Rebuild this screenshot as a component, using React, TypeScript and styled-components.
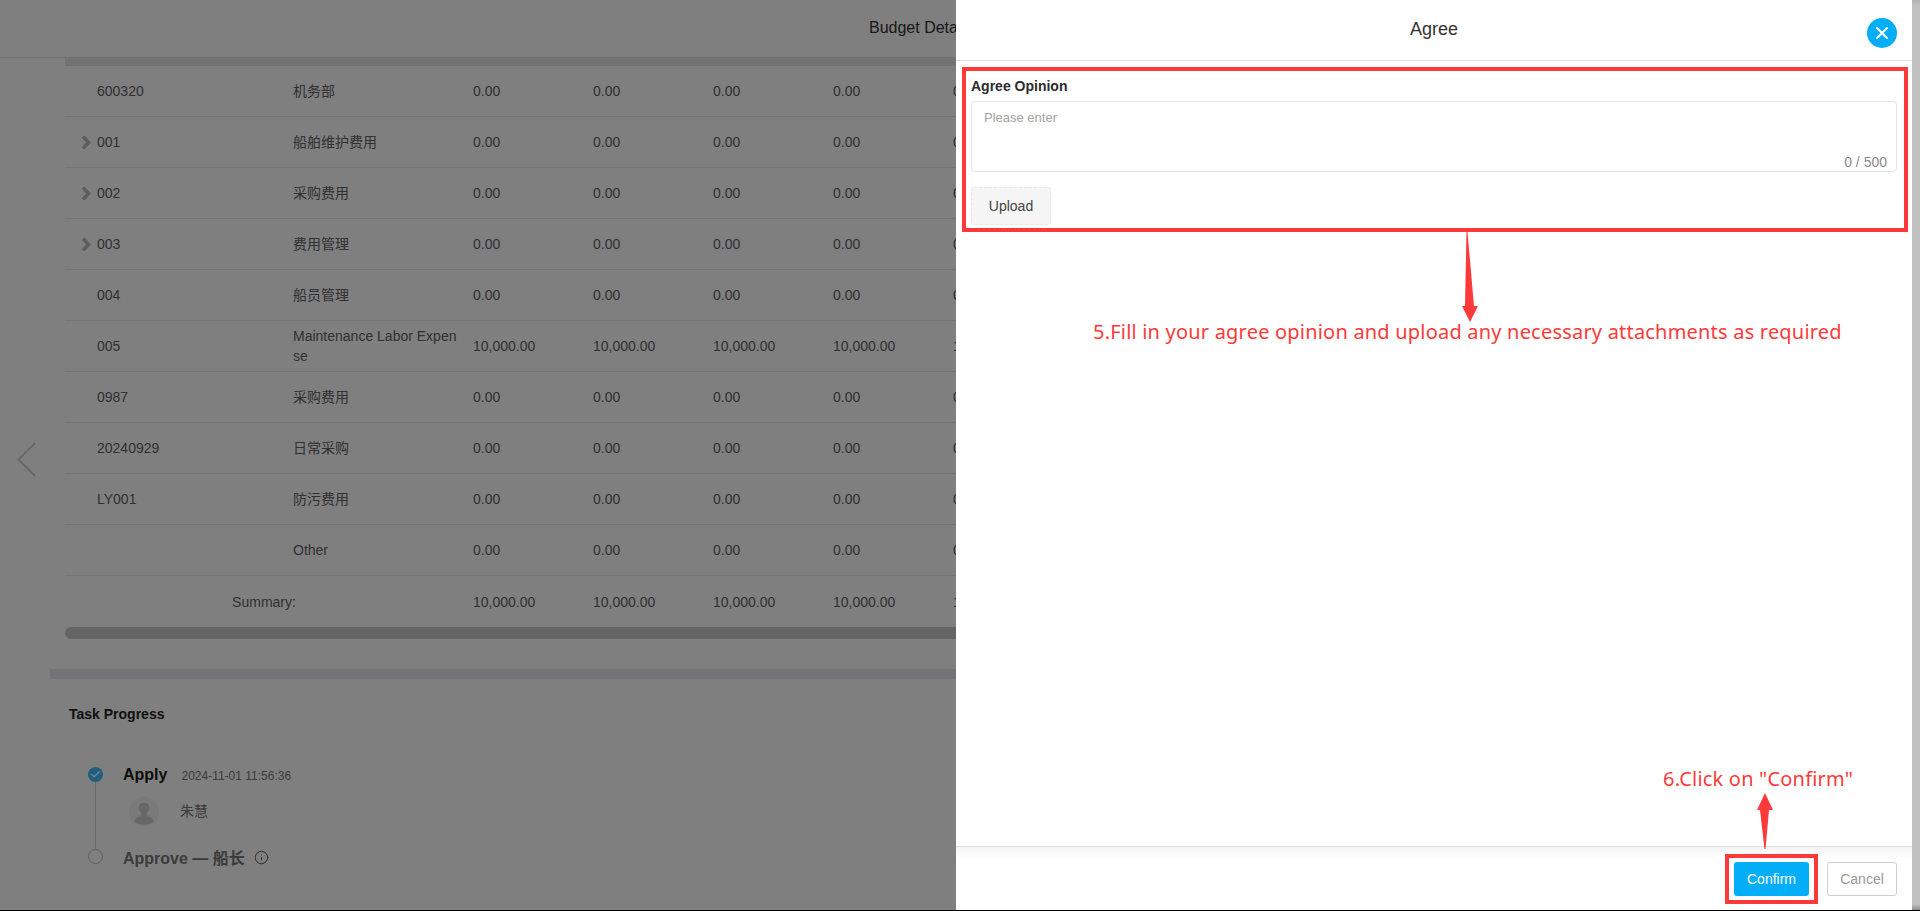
import React from 'react';
import styled, { createGlobalStyle } from 'styled-components';
import { Check, Info, X } from 'lucide-react';

const SANS = '"Liberation Sans", "Noto Sans CJK SC", sans-serif';
const RED = '#fd3a3a';

const GlobalStyle = createGlobalStyle`
  html, body {
    margin: 0;
    padding: 0;
    height: 100%;
    overflow: hidden;
    background: #fff;
    font-family: ${SANS};
  }
`;

type BudgetRow = {
  code: string;
  name: string;
  value: string;
  expandable?: boolean;
};

const ROWS: BudgetRow[] = [
  { code: '600320', name: '机务部', value: '0.00' },
  { code: '001', name: '船舶维护费用', value: '0.00', expandable: true },
  { code: '002', name: '采购费用', value: '0.00', expandable: true },
  { code: '003', name: '费用管理', value: '0.00', expandable: true },
  { code: '004', name: '船员管理', value: '0.00' },
  { code: '005', name: 'Maintenance Labor Expense', value: '10,000.00' },
  { code: '0987', name: '采购费用', value: '0.00' },
  { code: '20240929', name: '日常采购', value: '0.00' },
  { code: 'LY001', name: '防污费用', value: '0.00' },
  { code: '', name: 'Other', value: '0.00' },
];

const VALUE_COLUMNS = [0, 1, 2, 3, 4];

const App = () => {
  return (
    <>
      <GlobalStyle />
      <Screen>
        <Viewport>
          <Page>
            <PageHeader>Budget Details</PageHeader>
            <TableClip>
              <BudgetTable>
                <colgroup>
                  <col width={218} />
                  <col width={180} />
                  {VALUE_COLUMNS.map((i) => (
                    <col key={i} width={120} />
                  ))}
                </colgroup>
                <thead>
                  <tr>
                    <HeadBand colSpan={7} />
                  </tr>
                </thead>
                <tbody>
                  {ROWS.map((row) => (
                    <tr key={row.code + row.name}>
                      <CodeCell>
                        <CodeInner>
                          <ExpanderSlot>
                            {row.expandable && (
                              <svg width="10" height="13" viewBox="0 0 10 13">
                                <path d="M2 0.5 L7.5 6.5 L2 12.5" fill="none" stroke="#bcbcbc" strokeWidth="3.6" />
                              </svg>
                            )}
                          </ExpanderSlot>
                          {row.code}
                        </CodeInner>
                      </CodeCell>
                      <NameCell>{row.name}</NameCell>
                      {VALUE_COLUMNS.map((i) => (
                        <ValueCell key={i}>{row.value}</ValueCell>
                      ))}
                    </tr>
                  ))}
                  <tr>
                    <SummaryCell colSpan={2}>Summary:</SummaryCell>
                    {VALUE_COLUMNS.map((i) => (
                      <SummaryValue key={i}>10,000.00</SummaryValue>
                    ))}
                  </tr>
                </tbody>
              </BudgetTable>
              <TableScrollThumb />
            </TableClip>
            <SectionBand />
            <TaskSection>
              <TaskTitle>Task Progress</TaskTitle>
              <Step>
                <StepRail>
                  <DoneDot>
                    <Check size={11} color="#fff" strokeWidth={3} />
                  </DoneDot>
                  <StepLine />
                </StepRail>
                <StepBody>
                  <StepHead>
                    <StepName>Apply</StepName>
                    <StepTime>2024-11-01 11:56:36</StepTime>
                  </StepHead>
                  <Assignee>
                    <Avatar>
                      <svg width="30" height="30" viewBox="0 0 30 30">
                        <circle cx="15" cy="11" r="5.5" fill="#cfcfcf" />
                        <path d="M12.5 15 L17.5 15 L18 19 C21 20 24 21 25 24 A15 15 0 0 1 5 24 C6 21 9 20 12 19 Z" fill="#cfcfcf" />
                      </svg>
                    </Avatar>
                    <AssigneeName>朱慧</AssigneeName>
                  </Assignee>
                </StepBody>
              </Step>
              <Step>
                <StepRail>
                  <PendingDot />
                </StepRail>
                <StepBody>
                  <StepHead>
                    <StepName $pending>Approve — 船长</StepName>
                    <Info size={15} color="#5c5c5c" strokeWidth={1.6} />
                  </StepHead>
                </StepBody>
              </Step>
            </TaskSection>

            <PrevArrow width="20" height="35" viewBox="0 0 20 35">
              <path d="M18 1 L1.5 17.5 L18 34" fill="none" stroke="#cfcfcf" strokeWidth="2" />
            </PrevArrow>

            <Overlay />

            <Drawer>
              <DrawerHeader>
                <DrawerTitle>Agree</DrawerTitle>
                <CloseButton>
                  <X size={20} color="#fff" strokeWidth={2.4} />
                </CloseButton>
              </DrawerHeader>
              <DrawerBody>
                <FieldLabel>Agree Opinion</FieldLabel>
                <TextareaWrap>
                  <OpinionInput placeholder="Please enter" />
                  <Counter>0 / 500</Counter>
                </TextareaWrap>
                <UploadButton>Upload</UploadButton>
              </DrawerBody>
              <DrawerFooter>
                <ConfirmButton>Confirm</ConfirmButton>
                <CancelButton>Cancel</CancelButton>
              </DrawerFooter>
            </Drawer>

            <FormHighlight />
            <FillArrow width="20" height="90" viewBox="0 0 20 90">
              <polygon points="6.5,0 7.5,0 14,74 18,74 10,90 2,74 5,74" fill={RED} />
            </FillArrow>
            <FillNote>5.Fill in your agree opinion and upload any necessary attachments as required</FillNote>

            <ConfirmHighlight />
            <ConfirmArrow width="18" height="57" viewBox="0 0 18 57">
              <polygon points="9,0 17,17 13,17 9.5,56 8.5,56 4,17 1,17" fill={RED} />
            </ConfirmArrow>
            <ConfirmNote>6.Click on "Confirm"</ConfirmNote>
          </Page>
          <WindowScrollbar />
        </Viewport>
      </Screen>
    </>
  );
};

const Screen = styled.div`
  width: 1920px;
  height: 911px;
  display: flex;
  flex-direction: column;
  border-bottom: 1px solid #000;
  box-sizing: border-box;
`;
const Viewport = styled.div`
  flex: 1;
  display: flex;
  min-height: 0;
`;
const Page = styled.div`
  position: relative;
  flex: 1;
  min-width: 0;
  overflow: hidden;
  background: #fff;
  color: #606266;
  font-size: 14px;
`;
const WindowScrollbar = styled.div`
  width: 8px;
  background: linear-gradient(#b0b0b0 0, #c1c1c1 6px, #c1c1c1 calc(100% - 6px), #909090 100%);
`;
const PageHeader = styled.div`
  height: 57px;
  box-sizing: content-box;
  border-bottom: 1px solid #e2e2e2;
  padding-left: 869px;
  font-size: 16px;
  line-height: 55px;
  color: #303133;
  white-space: nowrap;
`;
const TableClip = styled.div`
  margin-left: 65px;
  overflow: hidden;
`;
const BudgetTable = styled.table`
  width: 998px;
  table-layout: fixed;
  border-collapse: separate;
  border-spacing: 0;
`;
const HeadBand = styled.th`
  height: 8px;
  padding: 0;
  background: #e6e6e6;
`;
const Cell = styled.td`
  height: 51px;
  box-sizing: border-box;
  padding: 0 5px 0 10px;
  border-bottom: 1px solid #e8e8e8;
  line-height: 20px;
`;
const CodeCell = styled(Cell)`
  padding: 0;
`;
const CodeInner = styled.div`
  display: flex;
  align-items: center;
  padding-left: 16px;
`;
const ExpanderSlot = styled.span`
  display: inline-flex;
  align-items: center;
  width: 16px;
`;
const NameCell = styled(Cell)`
  word-break: break-all;
`;
const ValueCell = styled(Cell)`
  white-space: nowrap;
`;
const SummaryCell = styled.td`
  height: 51px;
  padding: 0;
  text-align: center;
`;
const SummaryValue = styled.td`
  height: 51px;
  padding: 0 5px 0 10px;
  white-space: nowrap;
`;
const TableScrollThumb = styled.div`
  width: 1000px;
  height: 12px;
  border-radius: 6px;
  background: #c8c8c8;
`;
const SectionBand = styled.div`
  height: 10px;
  margin: 30px 0 0 50px;
  background: #e6e9ee;
`;
const TaskSection = styled.div`
  padding: 25px 0 0 69px;
`;
const TaskTitle = styled.div`
  font-size: 14px;
  font-weight: 700;
  line-height: 20px;
  color: #222;
  margin-bottom: 39px;
`;
const Step = styled.div`
  display: flex;
  gap: 20px;
  padding-left: 19px;
`;
const StepRail = styled.div`
  width: 15px;
  display: flex;
  flex-direction: column;
  align-items: center;
  padding-top: 4px;
`;
const DoneDot = styled.span`
  width: 15px;
  height: 15px;
  border-radius: 50%;
  background: #3ac0ff;
  display: flex;
  align-items: center;
  justify-content: center;
  flex: none;
`;
const PendingDot = styled.span`
  width: 15px;
  height: 15px;
  box-sizing: border-box;
  border-radius: 50%;
  border: 1px solid #bdbdbd;
  flex: none;
`;
const StepLine = styled.span`
  flex: 1;
  width: 1px;
  margin-bottom: -4px;
  background: #d0d0d0;
`;
const StepBody = styled.div`
  padding-bottom: 18px;
`;
const StepHead = styled.div`
  display: flex;
  align-items: center;
  gap: 9px;
  height: 24px;
`;
const StepName = styled.span<{ $pending?: boolean }>`
  font-size: 16px;
  font-weight: 700;
  color: ${({ $pending }) => ($pending ? '#777' : '#1a1a1a')};
`;
const StepTime = styled.span`
  font-size: 12px;
  color: #777;
  margin-top: 2px;
  margin-left: 5px;
`;
const Assignee = styled.div`
  display: flex;
  align-items: center;
  gap: 21px;
  margin: 10px 0 0 6px;
`;
const Avatar = styled.div`
  width: 30px;
  height: 30px;
  border-radius: 50%;
  overflow: hidden;
  background: #f4f4f4;
`;
const AssigneeName = styled.span`
  font-size: 14px;
  color: #777;
  margin-bottom: 4px;
`;
const PrevArrow = styled.svg`
  position: absolute;
  left: 17px;
  top: 442px;
`;
const Overlay = styled.div`
  position: absolute;
  inset: 0;
  background: rgba(0, 0, 0, 0.5);
`;
const Drawer = styled.div`
  position: absolute;
  top: 0;
  right: 0;
  bottom: 0;
  width: 956px;
  display: flex;
  flex-direction: column;
  background: #fff;
`;
const DrawerHeader = styled.div`
  position: relative;
  height: 60px;
  flex: none;
  border-bottom: 1px solid #e4e4e4;
  text-align: center;
`;
const DrawerTitle = styled.div`
  font-size: 18px;
  line-height: 58px;
  color: #333;
`;
const CloseButton = styled.button`
  position: absolute;
  top: 18px;
  right: 15px;
  width: 30px;
  height: 30px;
  padding: 0;
  border: 0;
  border-radius: 50%;
  background: #03aef8;
  display: flex;
  align-items: center;
  justify-content: center;
`;
const DrawerBody = styled.div`
  flex: 1;
  padding: 15px 15px 0;
`;
const FieldLabel = styled.div`
  font-size: 14px;
  font-weight: 700;
  line-height: 20px;
  color: #2b2b2b;
  margin-bottom: 5px;
`;
const TextareaWrap = styled.div`
  position: relative;
  height: 71px;
`;
const OpinionInput = styled.textarea`
  display: block;
  width: 100%;
  height: 100%;
  box-sizing: border-box;
  padding: 8px 12px;
  border: 1px solid #e4e4e4;
  border-radius: 4px;
  outline: none;
  resize: none;
  font-family: ${SANS};
  font-size: 13px;
  line-height: 16px;
  &::placeholder {
    color: #a3a3a3;
  }
`;
const Counter = styled.span`
  position: absolute;
  right: 10px;
  bottom: 1px;
  font-size: 14px;
  line-height: 18px;
  color: #8a8a8a;
`;
const UploadButton = styled.button`
  display: block;
  width: 80px;
  height: 38px;
  margin-top: 15px;
  padding: 0;
  border: 1px dashed #e6e6e6;
  border-radius: 3px;
  background: #f5f5f5;
  font-family: ${SANS};
  font-size: 14px;
  color: #444;
`;
const DrawerFooter = styled.div`
  height: 64px;
  flex: none;
  box-sizing: border-box;
  display: flex;
  align-items: center;
  justify-content: flex-end;
  gap: 18px;
  padding: 0 15px 0 0;
  border-top: 1px solid #e2e2e2;
  background: linear-gradient(#f4f4f4, #fff 12px);
`;
const ConfirmButton = styled.button`
  width: 75px;
  height: 34px;
  padding: 0;
  border: 0;
  border-radius: 3px;
  background: #03aef8;
  color: #fff;
  font-family: ${SANS};
  font-size: 14px;
`;
const CancelButton = styled.button`
  width: 70px;
  height: 34px;
  padding: 0;
  border: 1px solid #cfcfcf;
  border-radius: 3px;
  background: #fff;
  color: #999;
  font-family: ${SANS};
  font-size: 14px;
`;
const FormHighlight = styled.div`
  position: absolute;
  left: 962px;
  top: 67px;
  width: 946px;
  height: 165px;
  box-sizing: border-box;
  border: 4px solid ${RED};
`;
const ConfirmHighlight = styled.div`
  position: absolute;
  left: 1725px;
  top: 854px;
  width: 93px;
  height: 50px;
  box-sizing: border-box;
  border: 4px solid ${RED};
`;
const FillArrow = styled.svg`
  position: absolute;
  left: 1460px;
  top: 232px;
`;
const ConfirmArrow = styled.svg`
  position: absolute;
  left: 1756px;
  top: 793px;
`;
const Note = styled.div`
  position: absolute;
  font-family: "Noto Sans", sans-serif;
  font-size: 20px;
  letter-spacing: 0.2px;
  line-height: 26px;
  color: ${RED};
  white-space: nowrap;
`;
const FillNote = styled(Note)`
  left: 1093px;
  top: 319px;
`;
const ConfirmNote = styled(Note)`
  left: 1663px;
  top: 766px;
`;

export default App;
